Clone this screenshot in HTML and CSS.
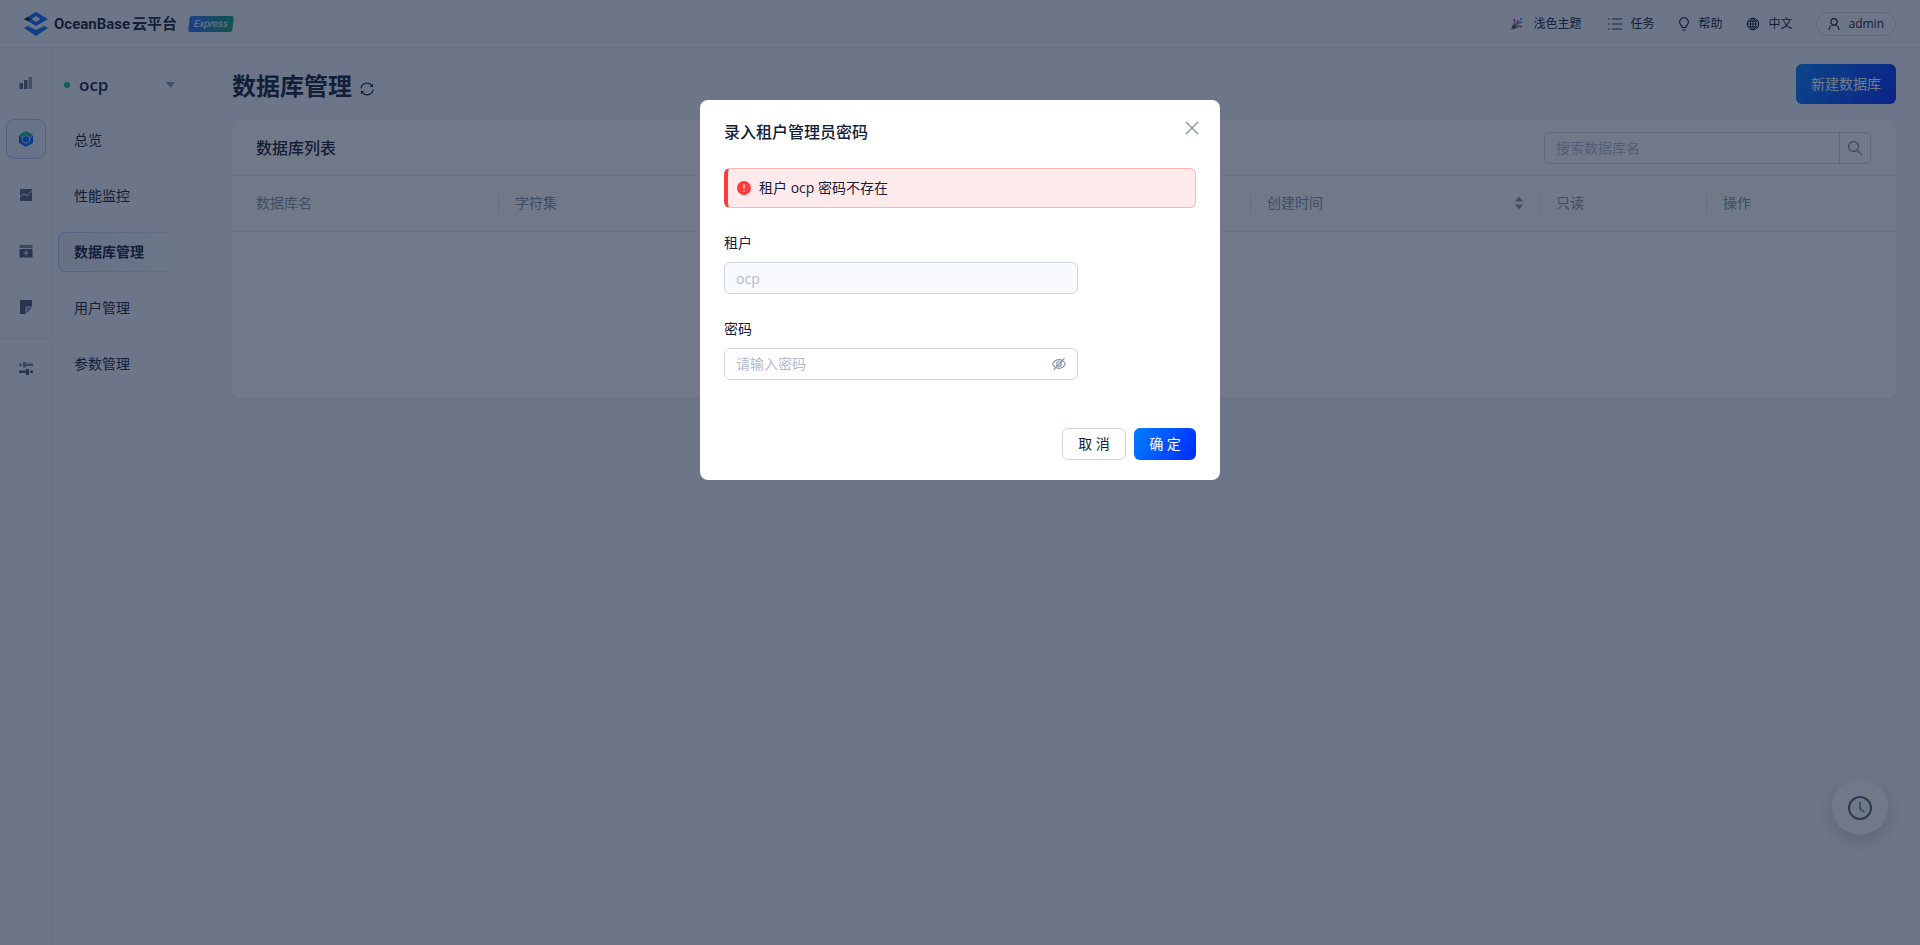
FILE: index.html
```html
<!DOCTYPE html>
<html lang="zh-CN">
<head>
<meta charset="utf-8">
<title>OceanBase 云平台</title>
<link rel="stylesheet" href="styles.css">
</head>
<body>
<div class="app">
  <header class="topbar">
    <a class="brand" href="#">
      <svg class="brand-mark" viewBox="0 0 24 24" width="24" height="24">
        <path fill="#0a6cff" fill-rule="evenodd" d="M12 0 24 7 12 14 0 7zM12 4 7.500 7l4.500 3 4.500-3z"/>
        <path fill="#132039" d="M0 7l3.500-2L7.500 7l-4 2z"/>
        <path fill="#0a6cff" d="M0 16l4-2 8 4 8-4 4 2-12 8z"/>
      </svg>
      <span class="brand-name"><span>OceanBase</span><span>云平台</span></span>
      <span class="brand-tag"><em>Express</em></span>
    </a>
    <nav class="tools">
      <button class="tool tool-theme">
        <svg viewBox="0 0 12 12" width="12" height="12">
          <path fill="#8a7460" d="M0 12 3 4l5 5z"/><path fill="#3a3a52" d="M1 9l1-2 3 3-2 1z"/>
          <path stroke="#e0218a" stroke-width="1.500" fill="none" d="M4 4 3 1M6 5l1-3M8 8l3 1"/>
          <path stroke="#1aa0e8" stroke-width="1.500" fill="none" d="M7 6l2-2 2 1M10 0v2"/>
          <path stroke="#b46be0" stroke-width="1.500" d="M5 5l2 2"/>
        </svg>浅色主题</button>
      <button class="tool tool-task">
        <svg viewBox="0 0 14 14" width="14" height="14" fill="none" stroke="currentColor" stroke-width="1.200"><path d="M4 2h10M4 7h10M4 12h10M0 2h1.500M0 7h1.500M0 12h1.500"/></svg>任务</button>
      <button class="tool tool-help">
        <svg viewBox="0 0 12 14" width="12" height="14" fill="none" stroke="currentColor" stroke-width="1.200"><path d="M4 10.500V9A4.400 4.400 0 1 1 8 9v1.500zM4.200 13h3.600"/></svg>帮助</button>
      <button class="tool tool-lang">
        <svg viewBox="0 0 14 14" width="14" height="14" fill="none" stroke="currentColor"><circle cx="7" cy="7" r="5.800"/><ellipse cx="7" cy="7" rx="2.600" ry="5.800"/><path d="M1 7h12M7 1v12M2 4.200h10M2 9.800h10"/></svg>中文</button>
      <button class="tool user">
        <svg viewBox="0 0 12 14" width="12" height="14" fill="none" stroke="currentColor" stroke-width="1.200"><circle cx="6" cy="4.800" r="3.200"/><path d="M1 13c0-3 2.200-5 5-5s5 2 5 5"/></svg>admin</button>
    </nav>
  </header>

  <div class="frame">
    <aside class="rail">
      <a class="rail-item" href="#" aria-label="集群">
        <svg viewBox="0 0 14 14" width="14" height="14"><path fill="#53617f" d="M0.500 7H4v6H.5z"/><path fill="#53617f" d="M5 4h3.500v9H5z"/><path fill="#8592ad" d="M9.500 1H13v12H9.500z"/></svg></a>
      <a class="rail-item is-active" href="#" aria-label="租户">
        <svg viewBox="0 0 14 16" width="14" height="16"><path fill="#006aff" d="M0 5l7-2 7 2v7l-7 4-7-4z"/><path fill="#0ac185" d="M7 0l6.500 3.600v1L10.500 6 7 4 3.500 6 .5 4.600v-1z"/><path fill="none" stroke="#b7cdf8" d="M1.500 5.500 3.500 6.500 7 4.500l3.500 2 2-1M3.500 6.500v4L7 12.500l3.500-2v-4"/></svg></a>
      <a class="rail-item" href="#" aria-label="监控">
        <svg viewBox="0 0 14 14" width="14" height="14"><path fill="#53617f" d="M1 1h12v12H1z"/><path fill="none" stroke="#dfe5f0" d="M1 8.500 5 6l3 1.500L13 3"/></svg></a>
      <a class="rail-item" href="#" aria-label="软件包">
        <svg viewBox="0 0 14 14" width="14" height="14"><path fill="#77849f" d="M.5 1h13v3H.5z"/><path fill="#465573" d="M.5 5h13v8.500H.5z"/><path stroke="#f3f6fc" d="M7 6.500v5M4.500 9h5"/></svg></a>
      <a class="rail-item" href="#" aria-label="日志">
        <svg viewBox="0 0 14 14" width="14" height="14"><path fill="#465573" d="M1 0h12v6.500H6.500V14H1z"/><path fill="#77849f" d="M7.500 7.500H13L7.500 13.500z"/></svg></a>
      <a class="rail-item rail-last" href="#" aria-label="参数">
        <svg viewBox="0 0 14 14" width="14" height="14"><path fill="#77849f" d="M0 2.500h3v2.500H0zM4 1h3v1.500h7V5H7v1.500H4z"/><path fill="#465573" d="M0 9.500h7V8h3v6H7v-2H0zM11 9.500h3V12h-3z"/></svg></a>
    </aside>

    <aside class="side">
      <button class="switcher"><span class="dot"></span><span class="switcher-name">ocp</span>
        <svg viewBox="0 0 9 6" width="9" height="6"><path fill="#8592ad" d="M0 0h9L4.500 6z"/></svg></button>
      <nav class="menu">
        <a class="menu-item" href="#">总览</a>
        <a class="menu-item" href="#">性能监控</a>
        <a class="menu-item is-active" href="#">数据库管理</a>
        <a class="menu-item" href="#">用户管理</a>
        <a class="menu-item" href="#">参数管理</a>
      </nav>
    </aside>

    <main class="main">
      <div class="page-head">
        <h1>数据库管理</h1>
        <button class="reload" aria-label="刷新"><svg viewBox="0 0 14 14" width="14" height="14" fill="none" stroke="currentColor" stroke-width="1.200"><path d="M1 6.500A6 6 0 0 1 12 4M13 7.500A6 6 0 0 1 2 10"/><path d="M12.500 2v2.500H10M1.500 12V9.500H4"/></svg></button>
        <button class="primary create">新建数据库</button>
      </div>
      <section class="card">
        <div class="card-head">
          <h2>数据库列表</h2>
          <div class="search">
            <input type="search" placeholder="搜索数据库名" aria-label="搜索数据库名">
            <button aria-label="搜索"><svg viewBox="0 0 16 16" width="16" height="16" fill="none" stroke="currentColor" stroke-width="1.300"><circle cx="6.500" cy="6.500" r="5"/><path d="M10 10l5 5"/></svg></button>
          </div>
        </div>
        <table class="table">
          <colgroup><col class="c-name"><col><col class="c-time"><col class="c-ro"><col class="c-op"></colgroup>
          <thead><tr>
            <th>数据库名</th><th>字符集</th>
            <th><span class="sortable">创建时间<svg viewBox="0 0 10 14" width="10" height="14"><path fill="#8592ad" d="M1 5.500h8L5 .5zM1 8.500h8l-4 5z"/></svg></span></th>
            <th>只读</th><th>操作</th>
          </tr></thead>
          <tbody><tr><td colspan="5"></td></tr></tbody>
        </table>
      </section>
    </main>
  </div>
  <button class="fab" aria-label="任务历史"><svg viewBox="0 0 24 24" width="24" height="24" fill="none" stroke="#53617f" stroke-width="2"><circle cx="12" cy="12" r="11"/><path stroke="#8592ad" d="M12 6v7l4.500 3"/></svg></button>
</div>

<div class="mask">
  <form class="modal" role="dialog" aria-labelledby="dlg-title">
    <div class="modal-head">
      <h2 id="dlg-title">录入租户管理员密码</h2>
      <button type="button" class="close" aria-label="关闭"><svg viewBox="0 0 14 14" width="14" height="14" fill="none" stroke="currentColor" stroke-width="1.400"><path d="M1 1l12 12M13 1 1 13"/></svg></button>
    </div>
    <div class="alert" role="alert">
      <svg viewBox="0 0 14 14" width="14" height="14"><circle cx="7" cy="7" r="7" fill="#ff3b3b"/><path stroke="#ffc4c6" stroke-width="1.400" d="M7 3v5M7 9.500V11"/></svg>
      <span>租户 ocp 密码不存在</span>
    </div>
    <div class="field">
      <label for="tenant">租户</label>
      <input class="box" id="tenant" value="ocp" disabled>
    </div>
    <div class="field">
      <label for="pwd">密码</label>
      <div class="box pwd">
        <input id="pwd" type="password" placeholder="请输入密码">
        <button type="button" aria-label="显示密码"><svg viewBox="0 0 14 14" width="14" height="14" fill="none" stroke="currentColor" stroke-width="1.100"><path d="M.6 7C3.500 1.200 10.500 1.200 13.400 7 10.500 12.800 3.500 12.800.6 7z"/><circle cx="7" cy="7" r="2.300"/><path d="M12.500 1.200 1.500 13"/></svg></button>
      </div>
    </div>
    <div class="modal-foot">
      <button type="button" class="plain">取 消</button>
      <button type="submit" class="primary">确 定</button>
    </div>
  </form>
</div>
</body>
</html>
```
FILE: styles.css
```css
* { box-sizing: border-box; }
body {
  margin: 0;
  font: 14px/22px "Open Sans", "Noto Sans CJK SC", sans-serif;
  color: #132039;
}
button, input { font: inherit; color: inherit; margin: 0; }
button { border: 0; background: none; padding: 0; cursor: pointer; }
a { color: inherit; text-decoration: none; }
svg { display: block; flex: none; }
h1, h2 { margin: 0; }

.app {
  display: flex;
  flex-direction: column;
  min-height: 100vh;
  background: #f3f8fe;
}

.topbar {
  display: flex;
  justify-content: space-between;
  align-items: center;
  height: 48px;
  padding: 0 24px;
  border-bottom: 1px solid #e2e8f3;
}
.brand { display: flex; align-items: center; }
.brand-name {
  display: flex;
  gap: 2px;
  margin-left: 6px;
  font: 700 15px/24px Roboto, "Noto Sans CJK SC", sans-serif;
}
.brand-tag {
  margin-left: 12px;
  width: 44px;
  height: 16px;
  border-radius: 2px;
  transform: skewX(-6deg);
  background: linear-gradient(90deg, #2f6bff, #0aa66f);
  color: #fff;
  font: 400 10px/16px Roboto, sans-serif;
  text-align: center;
}

.tools { display: flex; align-items: center; gap: 24px; padding-top: 1px; font-size: 12px; }
.tool { display: flex; align-items: center; gap: 8px; }
.tool-theme { gap: 10px; margin-right: 3px; }
.user {
  gap: 8px;
  height: 24px;
  padding: 0 11px;
  border: 1px solid #cdd5e4;
  border-radius: 12px;
}

.frame { display: flex; flex: 1; }
.rail {
  width: 52px;
  padding-top: 15px;
  border-right: 1px solid #e2e8f3;
  display: flex;
  flex-direction: column;
  align-items: center;
  gap: 16px;
}
.rail-item {
  width: 40px;
  height: 40px;
  display: grid;
  place-items: center;
  border-radius: 8px;
}
.rail-item.is-active { border: 1px solid #b4c9f5; background: #eaeffc; }
.rail-last {
  width: 100%;
  height: 58px;
  margin-top: -5px;
  border-top: 1px solid #d6deeb;
  border-radius: 0;
}

.side { width: 156px; padding: 15px 0 0 6px; }
.switcher {
  display: flex;
  align-items: center;
  width: 100%;
  height: 44px;
  padding: 0 33px 0 6px;
  font-size: 17px;
  font-weight: 600;
}
.dot { width: 6px; height: 6px; border-radius: 50%; background: #0ac185; }
.switcher-name { margin: 0 auto 0 9px; }
.menu { display: grid; gap: 16px; padding-top: 13px; }
.menu-item {
  height: 40px;
  padding: 0 16px;
  line-height: 40px;
  border-radius: 8px;
}
.menu-item.is-active {
  padding: 0 15px;
  border: 1px solid transparent;
  line-height: 38px;
  font-weight: 600;
  background:
    linear-gradient(90deg, #e4ebfb, #f3f8fe) padding-box,
    linear-gradient(90deg, #a9c2f5, #f3f8fe) border-box;
}

.main { flex: 1; padding: 16px 24px; min-width: 0; }
.page-head { display: flex; align-items: center; height: 40px; }
h1 { padding-top: 3px; font-size: 24px; line-height: 32px; font-weight: 700; }
.reload { margin: 9px 0 0 8px; }
.create { margin-left: auto; height: 40px; width: 100px; }
.primary {
  border-radius: 6px;
  background: linear-gradient(120deg, #0080ff, #0029ff);
  color: #fff;
}
.card {
  margin-top: 16px;
  background: #fff;
  border-radius: 8px;
  box-shadow: 0 1px 4px rgba(19, 32, 57, .06);
}
.card-head {
  display: flex;
  align-items: center;
  justify-content: space-between;
  height: 56px;
  padding: 0 25px 0 24px;
  border-bottom: 1px solid #e2e8f3;
}
h2 { font-size: 16px; line-height: 24px; font-weight: 500; }
.search {
  display: flex;
  width: 327px;
  height: 32px;
  border: 1px solid #cdd5e4;
  border-radius: 6px;
  color: #8592ad;
}
.search input { flex: 1; min-width: 0; border: 0; background: none; padding: 0 11px; }
.search button { width: 31px; border-left: 1px solid #cdd5e4; display: grid; place-items: center; }
::placeholder { color: #b0bbd1; opacity: 1; }

.table { width: 100%; border-collapse: collapse; table-layout: fixed; }
.c-name { width: 267px; }
.c-time { width: 289px; }
.c-ro { width: 167px; }
.c-op { width: 189px; }
.table th {
  position: relative;
  height: 55px;
  padding: 0 16px;
  text-align: left;
  font-weight: 400;
  color: #8592ad;
  border-bottom: 1px solid #e2e8f3;
}
.table th:first-child { padding-left: 24px; }
.table th:not(:last-child)::after {
  content: "";
  position: absolute;
  right: 0;
  top: 17px;
  width: 1px;
  height: 22px;
  background: #e2e8f3;
}
.sortable { display: flex; align-items: center; justify-content: space-between; }
.table td { height: 167px; padding: 0; }

.fab {
  position: fixed;
  right: 32px;
  bottom: 110px;
  width: 56px;
  height: 56px;
  display: grid;
  place-items: center;
  padding-top: 2px;
  border-radius: 50%;
  background: #fff;
  box-shadow: 0 6px 20px rgba(19, 32, 57, .2);
}

.mask {
  position: fixed;
  inset: 0;
  padding-top: 100px;
  background: rgba(19, 32, 57, .6);
}
.modal {
  width: 520px;
  max-width: 100%;
  margin: 0 auto;
  padding: 20px 24px;
  border-radius: 8px;
  background: #fff;
}
.modal-head { display: flex; justify-content: space-between; align-items: flex-start; }
.close { color: #8592ad; margin: 1px -3px 0 0; }
.alert {
  display: flex;
  align-items: center;
  gap: 8px;
  height: 40px;
  margin: 24px 0;
  padding: 0 9px;
  border: 1px solid #ffb3b5;
  border-left: 4px solid #ff3b3b;
  border-radius: 6px;
  background: #ffeaeb;
}
.field { width: 75%; margin-bottom: 24px; }
.field label { display: block; margin-bottom: 8px; }
.box {
  display: block;
  width: 100%;
  height: 32px;
  padding: 0 11px;
  border: 1px solid #cdd5e4;
  border-radius: 6px;
  background: #fff;
}
.box:disabled { background: #f8fafe; color: #b0bbd1; }
.pwd { display: flex; align-items: center; }
.pwd input { flex: 1; min-width: 0; border: 0; padding: 0; outline: 0; }
.pwd button { color: #8592ad; }
.modal-foot { display: flex; justify-content: flex-end; gap: 8px; margin-top: 48px; }
.modal-foot button { height: 32px; width: 62px; border-radius: 6px; }
.modal-foot .plain { width: 64px; border: 1px solid #cdd5e4; }
```
